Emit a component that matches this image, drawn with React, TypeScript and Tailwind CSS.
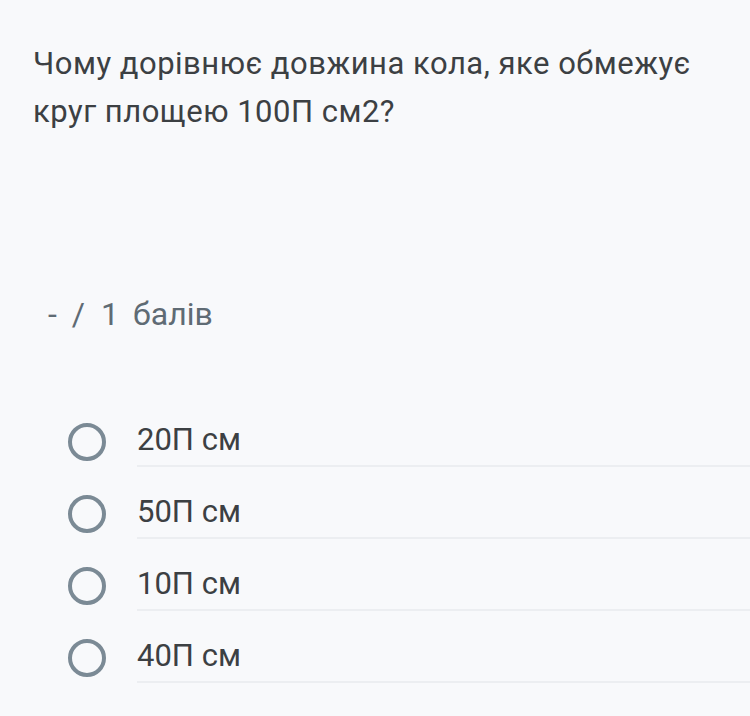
import React from "react";

const options = ["20П см", "50П см", "10П см", "40П см"];

export default function App() {
  return (
    <div
      className="w-[750px] h-[716px] bg-[#f8f9fb] overflow-hidden"
      style={{ fontFamily: "Roboto, 'Noto Sans', sans-serif" }}
    >
      <div className="pl-[33px] pr-[20px] pt-[40px] text-[31px] leading-[48px] tracking-[0.5px] text-[#3c4043]">
        Чому дорівнює довжина кола, яке обмежує круг площею 100П см2?
      </div>
      <div className="mt-[158px] pl-[48px] flex items-baseline text-[32px] leading-[40px] text-[#5f6b74]">
        <span>-</span>
        <span className="ml-[15px]">/</span>
        <span className="ml-[16px]">1</span>
        <span className="ml-[14px]">балів</span>
      </div>
      <div className="mt-[61px] flex flex-col">
        {options.map((o) => (
          <div key={o} className="flex items-end h-[72px]">
            <div className="w-[137px] shrink-0 pl-[68px] pb-[6px]">
              <div className="w-[38px] h-[38px] rounded-full border-[4px] border-[#7b8a95]" />
            </div>
            <div className="flex-1 self-stretch flex items-end border-b-2 border-[#eceef1]">
              <div className="pb-[5px] text-[31px] leading-[40px] text-[#3c4043]">{o}</div>
            </div>
          </div>
        ))}
      </div>
    </div>
  );
}
